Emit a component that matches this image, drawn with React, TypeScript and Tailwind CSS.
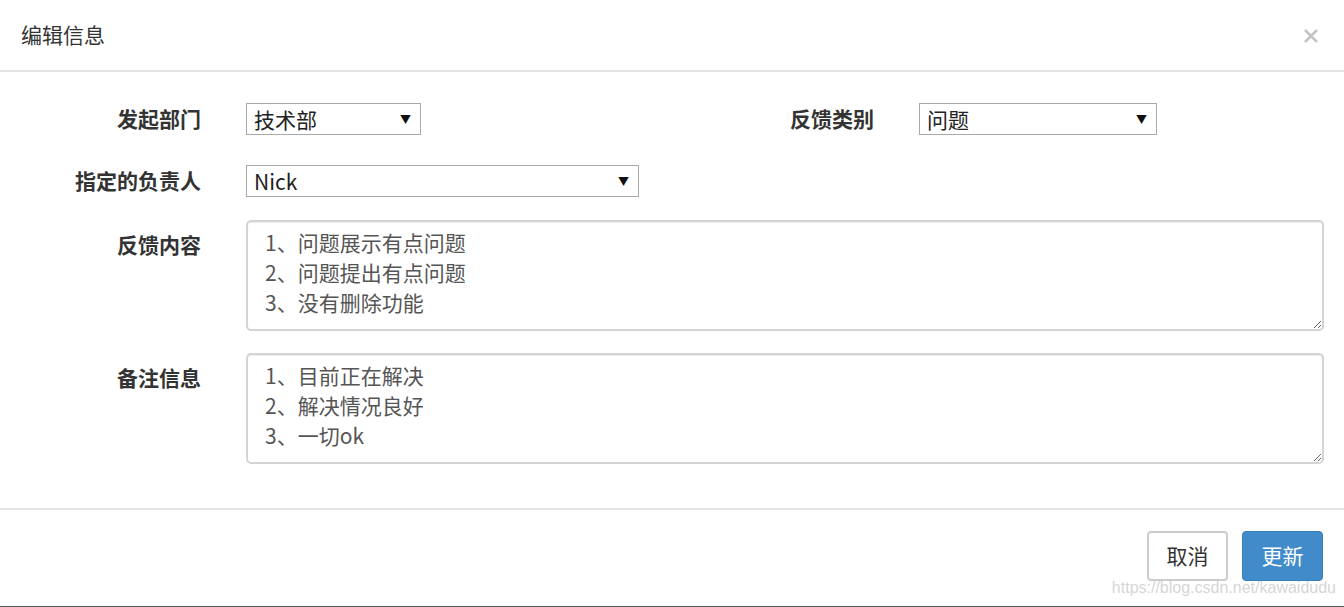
import React from "react";

const cjk = { fontFamily: '"Microsoft YaHei", "Noto Sans CJK SC", "Noto Sans", sans-serif' };

function Select({ value, width }: { value: string; width: string }) {
  return (
    <div
      className={`flex items-center justify-between h-[32px] border border-[#a9a9a9] bg-white pl-[7px] pr-[9px] text-[21px] text-[#222] ${width}`}
    >
      <span className="leading-none">{value}</span>
      <span className="text-[11px] text-[#111]">▼</span>
    </div>
  );
}

function Area({ value }: { value: string }) {
  return (
    <textarea
      readOnly
      defaultValue={value}
      className="block w-[1078px] h-[111px] rounded-[5px] border-2 border-[#d4d4d4] shadow-[inset_0_1px_1px_rgba(0,0,0,0.075)] pl-[17px] pt-[5px] text-[21px] leading-[30px] text-[#555] outline-none resize-y"
      style={cjk}
    />
  );
}

export default function App() {
  return (
    <div className="relative w-[1344px] h-[607px] bg-white border-b border-[#555] overflow-hidden" style={cjk}>
      <div className="flex items-center justify-between h-[72px] border-b-2 border-[#e5e5e5] pl-[21px] pr-[25px]">
        <div className="text-[21px] text-[#333]">编辑信息</div>
        <svg width="16" height="16" viewBox="0 0 16 16" className="mt-[2px]">
          <path d="M2 2 L14 14 M14 2 L2 14" stroke="#c4c4c4" strokeWidth="2.6" />
        </svg>
      </div>
      <div className="h-[438px] border-b-2 border-[#e5e5e5] pt-[31px]">
        <div className="flex">
          <div className="flex items-center w-[672px]">
            <div className="w-[201px] text-right font-bold text-[21px] text-[#333]">发起部门</div>
            <div className="ml-[45px]">
              <Select value="技术部" width="w-[175px]" />
            </div>
          </div>
          <div className="flex items-center">
            <div className="w-[202px] text-right font-bold text-[21px] text-[#333]">反馈类别</div>
            <div className="ml-[45px]">
              <Select value="问题" width="w-[238px]" />
            </div>
          </div>
        </div>
        <div className="flex items-center mt-[30px]">
          <div className="w-[201px] text-right font-bold text-[21px] text-[#333]">指定的负责人</div>
          <div className="ml-[45px]">
            <Select value="Nick" width="w-[393px]" />
          </div>
        </div>
        <div className="flex mt-[23px]">
          <div className="w-[201px] text-right font-bold text-[21px] text-[#333] pt-[9px]">反馈内容</div>
          <div className="ml-[45px]">
            <Area value={"1、问题展示有点问题\n2、问题提出有点问题\n3、没有删除功能"} />
          </div>
        </div>
        <div className="flex mt-[22px]">
          <div className="w-[201px] text-right font-bold text-[21px] text-[#333] pt-[9px]">备注信息</div>
          <div className="ml-[45px]">
            <Area value={"1、目前正在解决\n2、解决情况良好\n3、一切ok"} />
          </div>
        </div>
      </div>
      <div className="flex justify-end gap-[14px] pr-[21px] pt-[21px]">
        <button className="w-[81px] h-[50px] rounded-[4px] border-2 border-[#cccccc] bg-white text-[21px] text-[#333]">取消</button>
        <button className="w-[81px] h-[50px] rounded-[4px] border border-[#3a7fbf] bg-[#428bca] text-[21px] text-white">更新</button>
      </div>
      <div
        className="absolute right-[8px] bottom-[6px] text-[16px] text-[rgba(200,200,200,0.75)] pointer-events-none"
        style={{ fontFamily: '"Liberation Sans", Arial, sans-serif' }}
      >
        https://blog.csdn.net/kawaidudu
      </div>
    </div>
  );
}
